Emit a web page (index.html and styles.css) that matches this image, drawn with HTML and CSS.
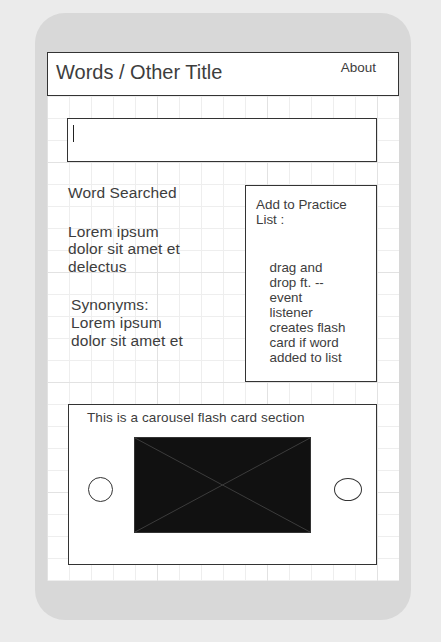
FILE: index.html
```html
<!DOCTYPE html>
<html lang="en">
<head>
<meta charset="utf-8">
<title>Words / Other Title</title>
<link rel="stylesheet" href="styles.css">
</head>
<body>
<div class="phone">
  <div class="screen">
    <header class="topbar">
      <h1 class="title">Words / Other Title</h1>
      <a class="about" href="#">About</a>
    </header>
    <main class="content">
      <div class="search"><span class="caret"></span></div>
      <div class="columns">
        <div class="word-col">
          <p class="word-title">Word Searched</p>
          <p class="word-def">Lorem ipsum<br>dolor sit amet et<br>delectus</p>
          <p class="synonyms">Synonyms:<br>Lorem ipsum<br>dolor sit amet et</p>
        </div>
        <aside class="practice">
          <p class="practice-title">Add to Practice<br>List :</p>
          <p class="practice-note">drag and<br>drop ft. --<br>event<br>listener<br>creates flash<br>card if word<br>added to list</p>
        </aside>
      </div>
      <section class="carousel">
        <p class="carousel-title">This is a carousel flash card section</p>
        <div class="carousel-row">
          <span class="nav nav-prev"></span>
          <div class="card-img">
            <svg width="177" height="96" viewBox="0 0 177 96" aria-hidden="true">
              <rect x="0.5" y="0.5" width="176" height="95" fill="#111111" stroke="#333333"/>
              <line x1="1" y1="1" x2="176" y2="95" stroke="#3c3c3c" stroke-width="1"/>
              <line x1="176" y1="1" x2="1" y2="95" stroke="#3c3c3c" stroke-width="1"/>
            </svg>
          </div>
          <span class="nav nav-next"></span>
        </div>
      </section>
    </main>
  </div>
</div>
</body>
</html>
```

FILE: styles.css
```css
* { box-sizing: border-box; }

html, body {
  margin: 0;
  padding: 0;
}

body {
  background: #ebebeb;
  font-family: "Liberation Sans", Arial, sans-serif;
  color: #3d3d3d;
  width: 441px;
  height: 642px;
  overflow: hidden;
}

p { margin: 0; }

.phone {
  margin: 13px 0 0 35px;
  width: 376px;
  height: 607px;
  border-radius: 30px;
  background: #d8d8d8;
  padding: 39px 12px;
}

.screen {
  width: 352px;
  height: 529px;
  background-color: #ffffff;
  background-image:
    linear-gradient(to right, #e2e2e2 1px, transparent 1px),
    linear-gradient(to bottom, #e2e2e2 1px, transparent 1px),
    linear-gradient(to right, #eeeeee 1px, transparent 1px),
    linear-gradient(to bottom, #eeeeee 1px, transparent 1px);
  background-size: 110px 110px, 110px 110px, 22px 22px, 22px 22px;
}

.topbar {
  height: 44px;
  border: 1px solid #333333;
  background: #ffffff;
  display: flex;
  justify-content: space-between;
  align-items: flex-start;
  padding: 7px 22px 0 8px;
}

.title {
  margin: 1px 0 0 0;
  font-size: 20px;
  line-height: 23px;
  font-weight: normal;
  color: #3d3d3d;
}

.about {
  font-size: 13.5px;
  line-height: 16px;
  color: #3d3d3d;
  text-decoration: none;
}

.content {
  padding: 22px 22px 0 20px;
}

.search {
  height: 44px;
  border: 1px solid #333333;
  background: #ffffff;
  padding: 6px 0 0 5px;
}

.caret {
  display: block;
  width: 1px;
  height: 17px;
  background: #222222;
}

.columns {
  margin: 23px 0 0 1px;
  display: flex;
  justify-content: space-between;
  align-items: flex-start;
}

.word-col {
  font-size: 15.5px;
  line-height: 17.6px;
  letter-spacing: 0.1px;
  padding-top: 0;
  margin-top: -1px;
}

.word-def { margin-top: 21px; }

.synonyms {
  margin-top: 21px;
  padding-left: 3px;
  line-height: 17.7px;
}

.practice {
  width: 132px;
  height: 197px;
  border: 1px solid #333333;
  background: #ffffff;
  padding: 11px 10px 0 10px;
  font-size: 13.4px;
  line-height: 15px;
}

.practice-note {
  margin-top: 33px;
  padding-left: 13.5px;
}

.carousel {
  margin: 22px 0 0 1px;
  height: 161px;
  border: 1px solid #333333;
  background: #ffffff;
  padding: 5px 0 0 18px;
}

.carousel-title {
  font-size: 13.5px;
  line-height: 15.5px;
  letter-spacing: 0.1px;
}

.carousel-row {
  margin-top: 11.5px;
  display: flex;
  align-items: flex-start;
}

.nav {
  display: block;
  border: 1px solid #333333;
  border-radius: 50%;
  background: #ffffff;
}

.nav-prev {
  width: 25px;
  height: 25px;
  margin: 40px 0 0 1px;
}

.card-img {
  width: 177px;
  height: 96px;
  margin-left: 21px;
}

.card-img svg { display: block; }

.nav-next {
  width: 28px;
  height: 23px;
  margin: 41px 0 0 23px;
}
```
